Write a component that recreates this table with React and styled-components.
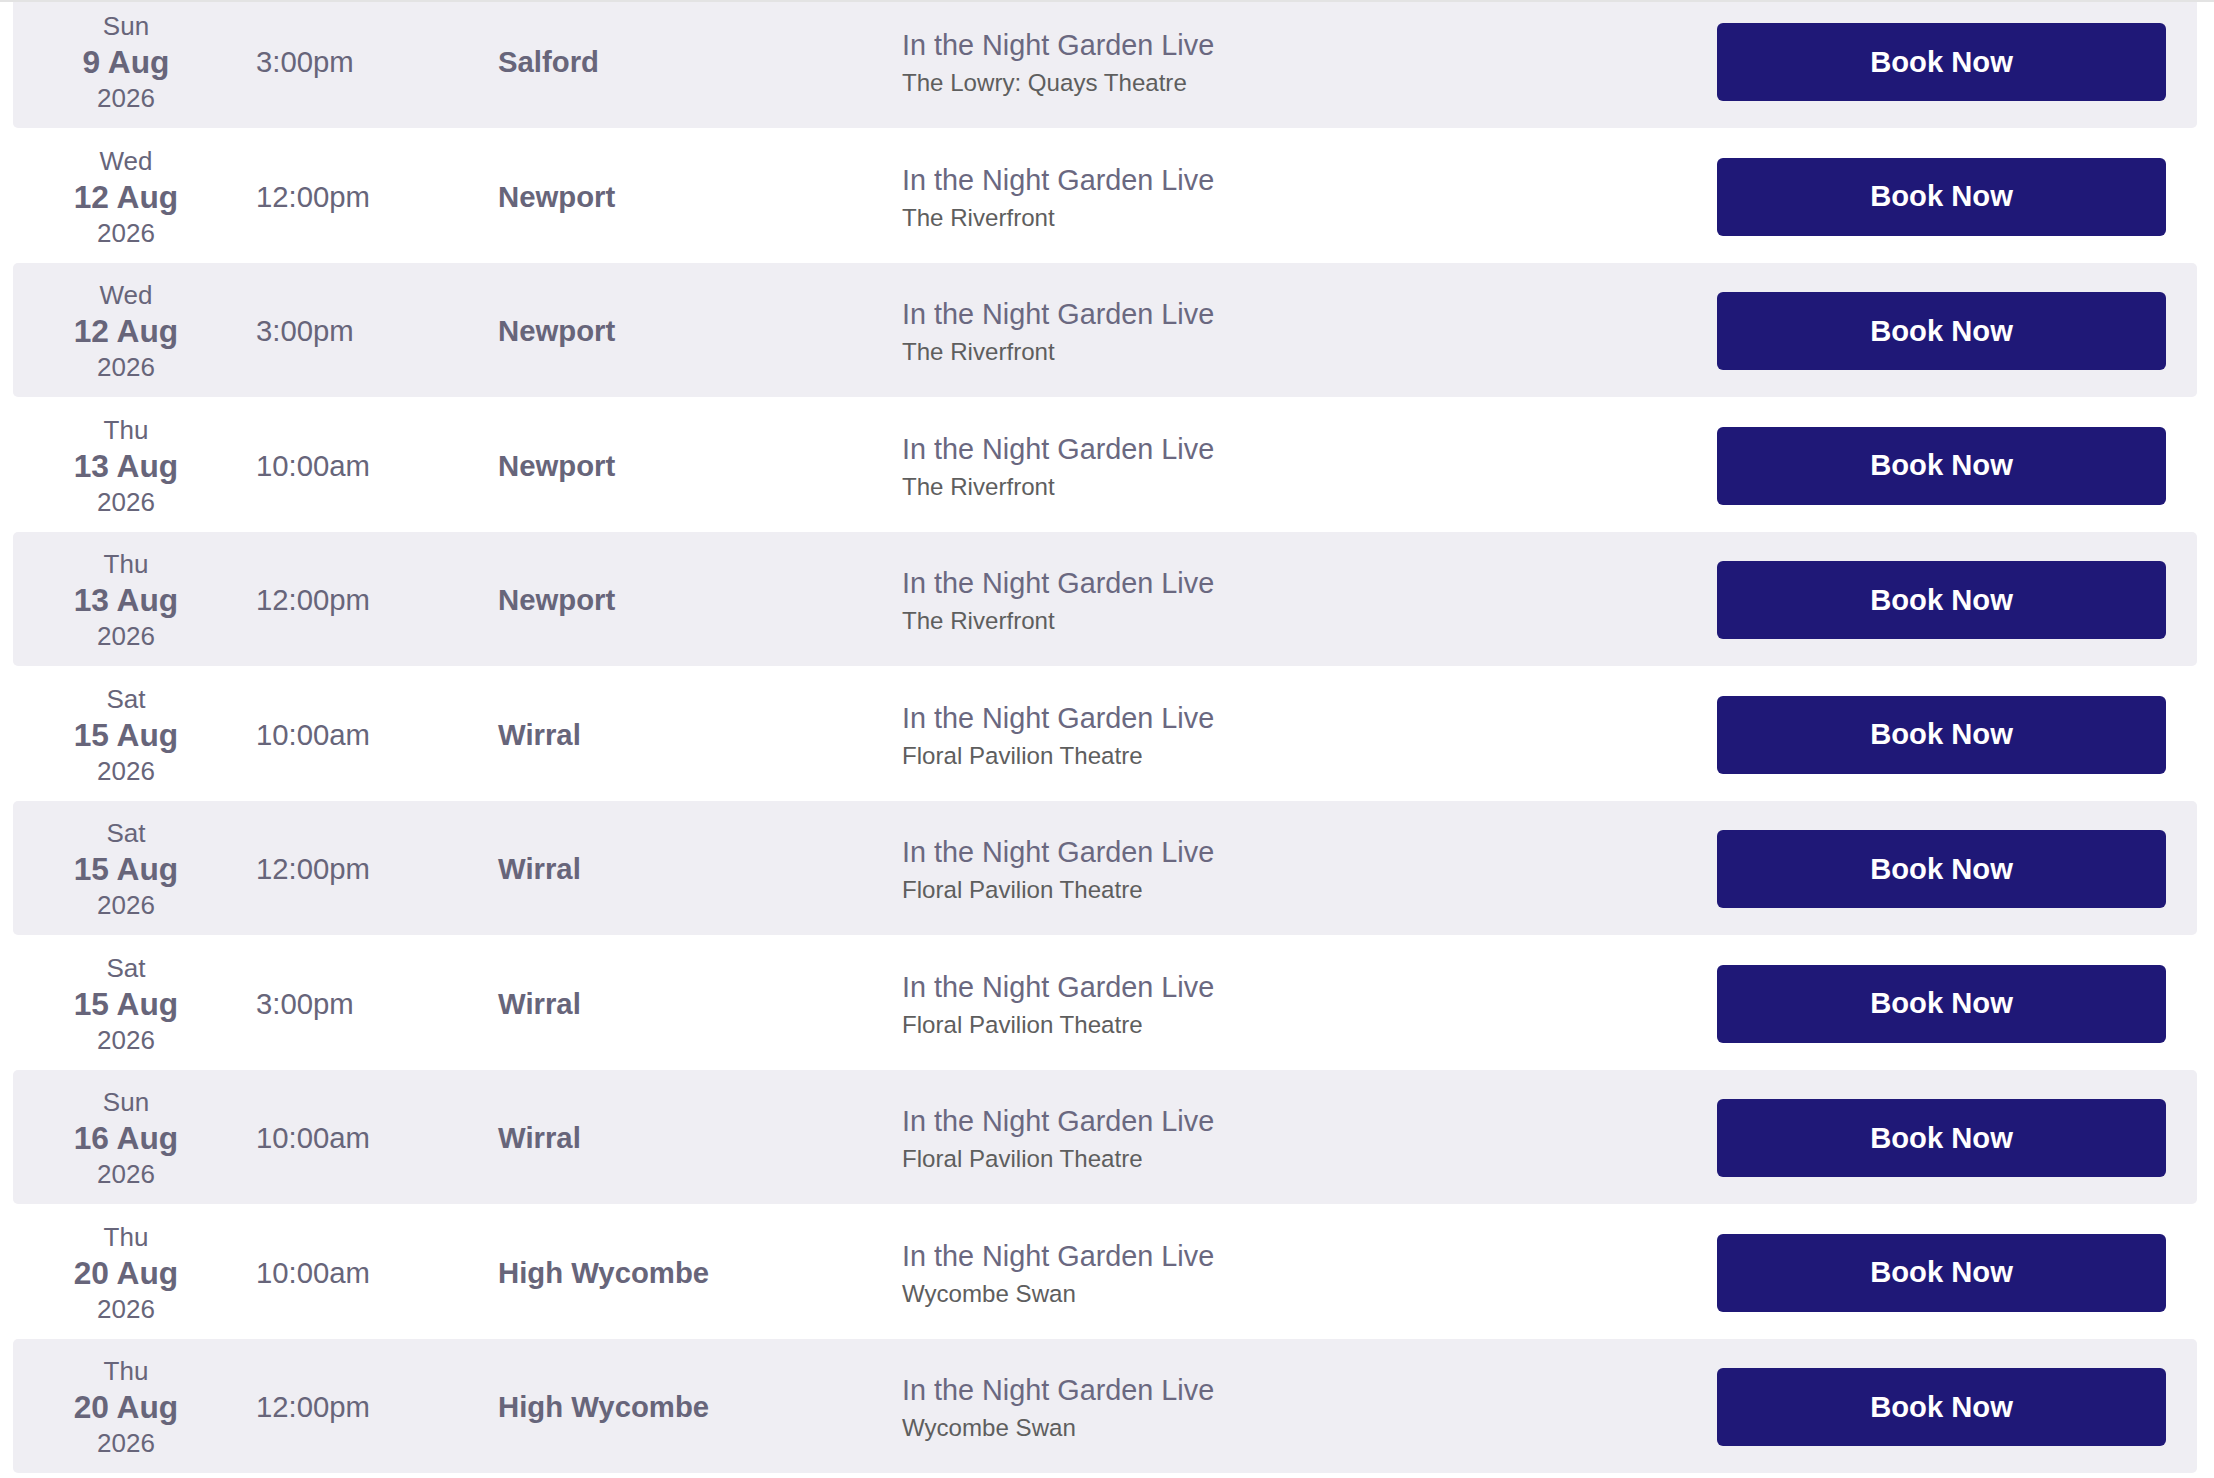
import React from 'react'
import styled, { createGlobalStyle } from 'styled-components'

const performances = [
  { day: 'Sun', date: '9 Aug', year: '2026', time: '3:00pm', city: 'Salford', venue: 'The Lowry: Quays Theatre' },
  { day: 'Wed', date: '12 Aug', year: '2026', time: '12:00pm', city: 'Newport', venue: 'The Riverfront' },
  { day: 'Wed', date: '12 Aug', year: '2026', time: '3:00pm', city: 'Newport', venue: 'The Riverfront' },
  { day: 'Thu', date: '13 Aug', year: '2026', time: '10:00am', city: 'Newport', venue: 'The Riverfront' },
  { day: 'Thu', date: '13 Aug', year: '2026', time: '12:00pm', city: 'Newport', venue: 'The Riverfront' },
  { day: 'Sat', date: '15 Aug', year: '2026', time: '10:00am', city: 'Wirral', venue: 'Floral Pavilion Theatre' },
  { day: 'Sat', date: '15 Aug', year: '2026', time: '12:00pm', city: 'Wirral', venue: 'Floral Pavilion Theatre' },
  { day: 'Sat', date: '15 Aug', year: '2026', time: '3:00pm', city: 'Wirral', venue: 'Floral Pavilion Theatre' },
  { day: 'Sun', date: '16 Aug', year: '2026', time: '10:00am', city: 'Wirral', venue: 'Floral Pavilion Theatre' },
  { day: 'Thu', date: '20 Aug', year: '2026', time: '10:00am', city: 'High Wycombe', venue: 'Wycombe Swan' },
  { day: 'Thu', date: '20 Aug', year: '2026', time: '12:00pm', city: 'High Wycombe', venue: 'Wycombe Swan' },
]

const GlobalStyle = createGlobalStyle`
  html, body {
    margin: 0;
    padding: 0;
    background: #fff;
  }
  body {
    font-family: "Liberation Sans", Arial, Helvetica, sans-serif;
  }
`

const App = () => {
  return <>
    <GlobalStyle />
    <Frame>
      <List>
        {performances.map((p, i) => {
          return <Row key={i} $shaded={i % 2 === 0}>
            <DateCell>
              <Day>{p.day}</Day>
              <DateText>{p.date}</DateText>
              <Year>{p.year}</Year>
            </DateCell>
            <Time>{p.time}</Time>
            <City>{p.city}</City>
            <Show>
              <Title>In the Night Garden Live</Title>
              <Venue>{p.venue}</Venue>
            </Show>
            <BookButton type="button">Book Now</BookButton>
          </Row>
        })}
      </List>
    </Frame>
  </>
}

const Frame = styled.main`
  border-top: 2px solid #e3e3e3;
  overflow: hidden;
  height: 1476px;
  padding: 0 17px 0 13px;
`

const List = styled.ul`
  list-style: none;
  margin: -8.4px 0 0;
  padding: 0;
`

const Row = styled.li`
  box-sizing: border-box;
  display: grid;
  grid-template-columns: 226px 225px 387px 1fr 449px;
  column-gap: 17px;
  align-items: center;
  height: 134.5px;
  padding: 2.8px 31px 0 0;
  border-radius: 5px;
  background: ${(p) => (p.$shaded ? '#efeef3' : '#fff')};
  color: #67657a;
`

const DateCell = styled.div`
  display: flex;
  flex-direction: column;
  align-items: center;
`

const Day = styled.span`
  font-size: 26px;
  line-height: 34px;
`

const DateText = styled.span`
  font-size: 31.7px;
  line-height: 38px;
  font-weight: 700;
`

const Year = styled.span`
  font-size: 26px;
  line-height: 34px;
`

const Time = styled.div`
  font-size: 29.3px;
`

const City = styled.div`
  font-size: 29.3px;
  font-weight: 700;
`

const Show = styled.div`
  display: flex;
  flex-direction: column;
  padding-top: 6px;
`

const Title = styled.span`
  font-size: 28.8px;
  line-height: 36px;
  color: #6a6880;
`

const Venue = styled.span`
  font-size: 24.1px;
  line-height: 40px;
  color: #5e5e5e;
`

const BookButton = styled.button`
  height: 78px;
  border: none;
  border-radius: 6px;
  background: #1f1877;
  color: #fff;
  font-family: inherit;
  font-size: 29.2px;
  font-weight: 700;
  cursor: pointer;
`

export default App
